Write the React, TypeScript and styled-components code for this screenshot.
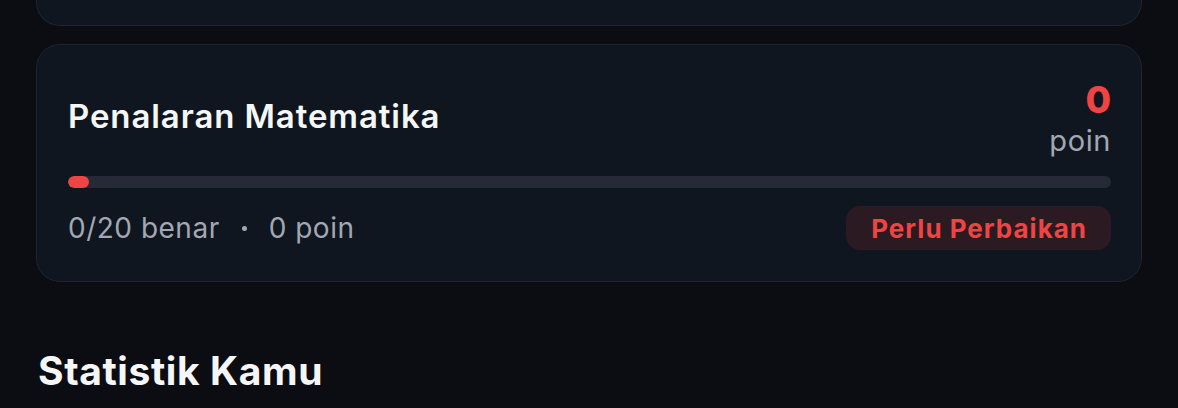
import styled, { createGlobalStyle } from "styled-components";

const GlobalStyle = createGlobalStyle`
  html, body {
    margin: 0;
    padding: 0;
    background: #0b0d12;
    font-family: Inter, "Noto Sans", sans-serif;
    color: #f5f6f8;
  }
`;

const Page = styled.div`
  padding: 0 36px;
  display: flex;
  flex-direction: column;
`;

const CardStub = styled.div`
  height: 25px;
  background: #10161f;
  border: 1px solid #1e2430;
  border-top: none;
  border-radius: 0 0 24px 24px;
`;

const Card = styled.section`
  margin-top: 18px;
  background: #10161f;
  border: 1px solid #1e2430;
  border-radius: 24px;
  padding: 31px 30px 31px 31px;
  display: flex;
  flex-direction: column;
`;

const Head = styled.div`
  display: flex;
  justify-content: space-between;
  align-items: center;
`;

const Title = styled.h3`
  margin: 0 0 2px;
  font-size: 33px;
  font-weight: 600;
  letter-spacing: 0.9px;
  color: #f5f6f8;
`;

const Score = styled.div`
  display: flex;
  flex-direction: column;
  align-items: flex-end;
`;

const ScoreValue = styled.span<{ $color: string }>`
  font-size: 37px;
  font-weight: 800;
  line-height: 48px;
  color: ${(p) => p.$color};
`;

const ScoreUnit = styled.span`
  font-size: 29px;
  line-height: 34px;
  letter-spacing: 0.6px;
  color: #a2a8b3;
`;

const Track = styled.div`
  margin-top: 18px;
  height: 12px;
  border-radius: 6px;
  background: #252a36;
  overflow: hidden;
`;

const Fill = styled.div<{ $color: string }>`
  height: 100%;
  min-width: 21px;
  border-radius: 6px;
  background: ${(p) => p.$color};
`;

const Foot = styled.div`
  margin-top: 18px;
  display: flex;
  justify-content: space-between;
  align-items: center;
`;

const Meta = styled.div`
  display: flex;
  align-items: center;
  gap: 22px;
  font-size: 28px;
  letter-spacing: 0.5px;
  color: #a2a8b3;
`;

const Dot = styled.span`
  width: 5px;
  height: 5px;
  border-radius: 50%;
  background: #a2a8b3;
`;

const Badge = styled.span<{ $color: string; $bg: string }>`
  height: 44px;
  padding: 0 24px 0 25px;
  display: inline-flex;
  align-items: center;
  border-radius: 14px;
  font-size: 26px;
  font-weight: 700;
  letter-spacing: 1px;
  color: ${(p) => p.$color};
  background: ${(p) => p.$bg};
`;

const SectionTitle = styled.h2`
  margin: 65px 0 0 2px;
  font-size: 39px;
  font-weight: 700;
  letter-spacing: 0.6px;
  color: #f5f6f8;
`;

export default function App() {
  const correct = 0;
  const total = 20;
  const points = 0;
  const pct = (correct / total) * 100;

  return (
    <>
      <GlobalStyle />
      <Page>
        <CardStub />
        <Card>
          <Head>
            <Title>Penalaran Matematika</Title>
            <Score>
              <ScoreValue $color="#ef4444">{points}</ScoreValue>
              <ScoreUnit>poin</ScoreUnit>
            </Score>
          </Head>
          <Track>
            <Fill $color="#ef4444" style={{ width: `${pct}%` }} />
          </Track>
          <Foot>
            <Meta>
              <span>
                {correct}/{total} benar
              </span>
              <Dot />
              <span>{points} poin</span>
            </Meta>
            <Badge $color="#ef4444" $bg="#2b1a21">
              Perlu Perbaikan
            </Badge>
          </Foot>
        </Card>
        <SectionTitle>Statistik Kamu</SectionTitle>
      </Page>
    </>
  );
}
